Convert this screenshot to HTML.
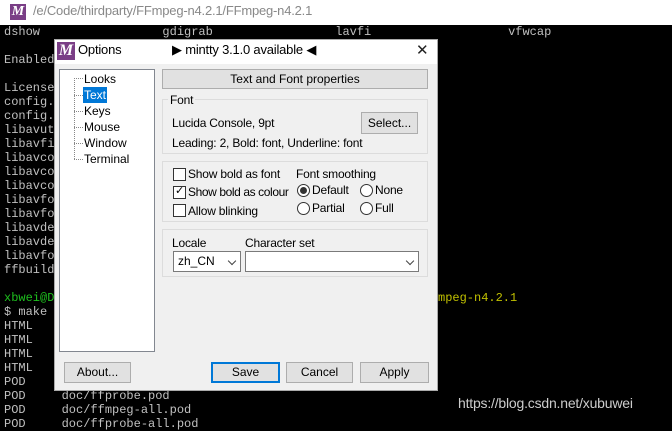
<!DOCTYPE html>
<html><head><style>
*{margin:0;padding:0;box-sizing:border-box}
body{width:672px;height:424px;overflow:hidden;background:#000;position:relative;font-family:"Liberation Sans",sans-serif;font-size:12px;color:#000}
.tb{position:absolute;left:0;top:0;width:672px;height:25px;background:#fff}
.logo{position:absolute;width:16px;height:16px;background:#7a3e86;color:#fff;font:italic bold 14px/16px "Liberation Serif",serif;text-align:center}
.term{position:absolute;left:4px;font:12px/14px "Liberation Mono",monospace;color:#c0c0c0;white-space:pre}
.a{position:absolute;letter-spacing:-0.2px}
.dlg{position:absolute;left:54px;top:39px;width:384px;height:352px;background:#f0f0f0;border:1px solid #aaa}
.btn{position:absolute;background:#e1e1e1;border:1px solid #adadad;text-align:center;line-height:18px}
.grp{position:absolute;border:1px solid #dcdcdc}
.cb{position:absolute;width:13px;height:13px;border:1px solid #333;background:#fff}
.rb{position:absolute;width:13px;height:13px;border:1px solid #333;border-radius:50%;background:#fff}
.sel{position:absolute;height:21px;border:1px solid #7a7a7a;background:#fff;padding-left:4px;line-height:19px}
.chev{position:absolute;right:5px;top:6px;width:6px;height:6px;border-right:1px solid #444;border-bottom:1px solid #444;transform:rotate(45deg)}
.tree{position:absolute;left:84px;font-size:12px}
</style></head><body>
<div class="tb"></div>
<div class="logo" style="left:10px;top:4px">M</div>
<div class="a" style="left:33px;top:3px;font-size:13px;color:#888">/e/Code/thirdparty/FFmpeg-n4.2.1/FFmpeg-n4.2.1</div>
<div class="term" style="top:25px">dshow                 gdigrab                 lavfi                   vfwcap

Enabled

License
config.
config.
libavut
libavfi
libavco
libavco
libavco
libavfo
libavfo
libavde
libavde
libavfo
ffbuild

<span style="color:#1ec01e">xbwei@D</span>
$ make
HTML
HTML
HTML
HTML
POD
POD     doc/ffprobe.pod
POD     doc/ffmpeg-all.pod
POD     doc/ffprobe-all.pod</div>
<div class="term" style="top:291px;left:438px;color:#c0c000">mpeg-n4.2.1</div>
<div class="a" style="left:458px;top:395px;font-size:14px;color:#ccc">https://blog.csdn.net/xubuwei</div>

<div class="dlg">
<div class="a" style="left:0;top:0;width:382px;height:24px;background:#fff"></div>
</div>
<div class="logo" style="left:57px;top:42px;width:18px;height:18px;line-height:18px;font-size:16px">M</div>
<div class="a" style="left:78px;top:42px;font-size:13px">Options</div>
<div class="a" style="left:172px;top:42px;font-size:13px">▶ mintty 3.1.0 available ◀</div>
<div class="a" style="left:416px;top:41px;font-size:15px;color:#222">✕</div>

<div class="a" style="left:59px;top:69px;width:96px;height:283px;background:#fff;border:1px solid #828790"></div>
<div class="a" style="left:74px;top:78px;height:81px;border-left:1px dotted #888"></div>
<div class="a" style="left:74px;top:78px;width:9px;border-top:1px dotted #888"></div>
<div class="a" style="left:74px;top:95px;width:9px;border-top:1px dotted #888"></div>
<div class="a" style="left:74px;top:111px;width:9px;border-top:1px dotted #888"></div>
<div class="a" style="left:74px;top:127px;width:9px;border-top:1px dotted #888"></div>
<div class="a" style="left:74px;top:143px;width:9px;border-top:1px dotted #888"></div>
<div class="a" style="left:74px;top:159px;width:9px;border-top:1px dotted #888"></div>
<div class="tree" style="top:72px">Looks</div>
<div class="tree" style="top:87px;left:83px;background:#0078d7;color:#fff;padding:0 1px;height:16px;line-height:16px">Text</div>
<div class="tree" style="top:104px">Keys</div>
<div class="tree" style="top:120px">Mouse</div>
<div class="tree" style="top:136px">Window</div>
<div class="tree" style="top:152px">Terminal</div>

<div class="btn" style="left:162px;top:69px;width:266px;height:20px">Text and Font properties</div>
<div class="grp" style="left:162px;top:99px;width:266px;height:55px"></div>
<div class="a" style="left:168px;top:93px;background:#f0f0f0;padding:0 2px">Font</div>
<div class="a" style="left:172px;top:116px">Lucida Console, 9pt</div>
<div class="a" style="left:172px;top:136px">Leading: 2, Bold: font, Underline: font</div>
<div class="btn" style="left:361px;top:112px;width:57px;height:22px;line-height:20px">Select...</div>

<div class="grp" style="left:162px;top:161px;width:266px;height:61px"></div>
<div class="cb" style="left:173px;top:168px"></div><div class="a" style="left:188px;top:167px">Show bold as font</div>
<div class="cb" style="left:173px;top:186px"></div><div class="a" style="left:175px;top:184px;font-size:11px">✓</div><div class="a" style="left:188px;top:185px;letter-spacing:-0.4px">Show bold as colour</div>
<div class="cb" style="left:173px;top:204px"></div><div class="a" style="left:188px;top:204px">Allow blinking</div>
<div class="a" style="left:296px;top:167px">Font smoothing</div>
<div class="rb" style="left:297px;top:184px"></div><div class="a" style="left:300px;top:187px;width:7px;height:7px;border-radius:50%;background:#333"></div><div class="a" style="left:312px;top:183px">Default</div>
<div class="rb" style="left:360px;top:184px"></div><div class="a" style="left:375px;top:183px">None</div>
<div class="rb" style="left:297px;top:202px"></div><div class="a" style="left:312px;top:201px">Partial</div>
<div class="rb" style="left:360px;top:202px"></div><div class="a" style="left:375px;top:201px">Full</div>

<div class="grp" style="left:162px;top:229px;width:266px;height:48px"></div>
<div class="a" style="left:172px;top:236px">Locale</div>
<div class="a" style="left:245px;top:236px">Character set</div>
<div class="sel" style="left:173px;top:251px;width:68px">zh_CN<div class="chev"></div></div>
<div class="sel" style="left:245px;top:251px;width:174px"><div class="chev"></div></div>

<div class="btn" style="left:64px;top:362px;width:67px;height:21px">About...</div>
<div class="btn" style="left:211px;top:362px;width:69px;height:21px;border:2px solid #0078d7;line-height:17px">Save</div>
<div class="btn" style="left:286px;top:362px;width:67px;height:21px">Cancel</div>
<div class="btn" style="left:360px;top:362px;width:69px;height:21px">Apply</div>
</body></html>
